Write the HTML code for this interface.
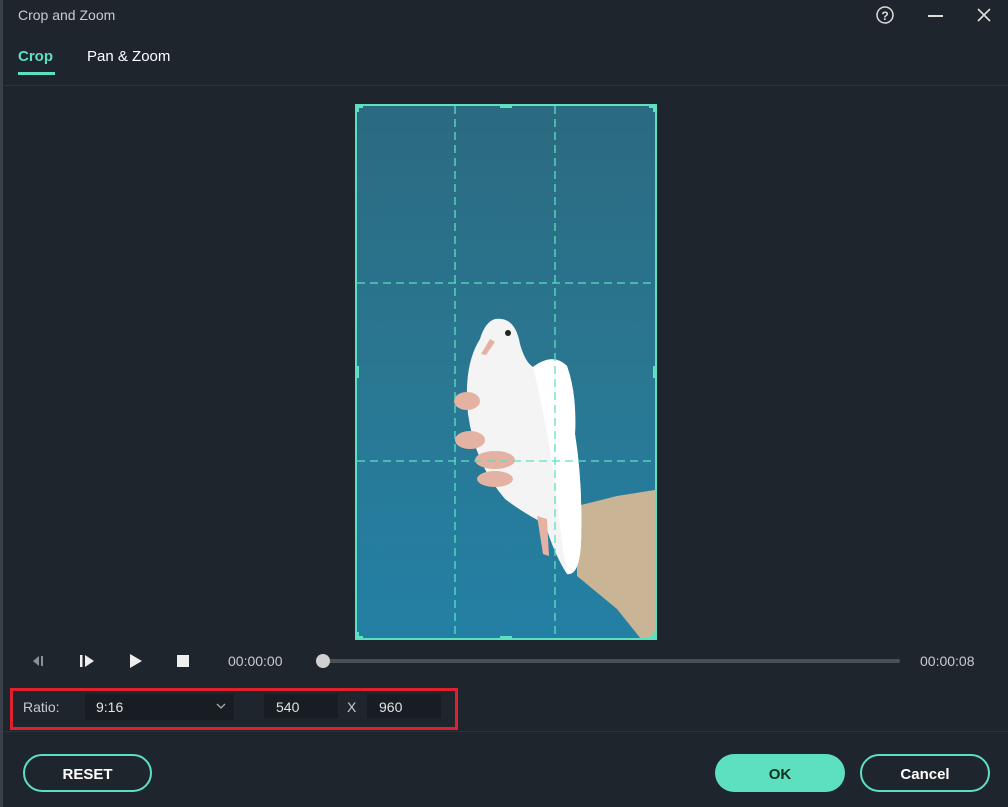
<!DOCTYPE html>
<html><head><style>
body{margin:0;width:1008px;height:807px;background:#1f252d;font-family:"Liberation Sans",sans-serif;position:relative;overflow:hidden;color:#e6e8ea}
.a{position:absolute}
.btn{position:absolute;height:38px;border-radius:20px;box-sizing:border-box;font-weight:bold;font-size:15px;display:flex;align-items:center;justify-content:center;padding-top:2px}
</style></head><body>
<div class="a" style="left:0;top:0;width:3px;height:807px;background:#3a4048"></div>
<div class="a" style="left:18px;top:7px;font-size:14px;color:#c8ccd0">Crop and Zoom</div>
<svg class="a" style="left:875px;top:5px" width="20" height="20"><circle cx="10" cy="10" r="8" fill="none" stroke="#ddd" stroke-width="1.5"/><text x="10" y="15" font-size="12" text-anchor="middle" fill="#ddd" font-family="Liberation Sans" font-weight="bold">?</text></svg>
<div class="a" style="left:928px;top:15px;width:15px;height:1.5px;background:#ddd"></div>
<svg class="a" style="left:976px;top:7px" width="16" height="16"><path d="M2 2L14 14M14 2L2 14" stroke="#ddd" stroke-width="1.6"/></svg>
<div class="a" style="left:18px;top:48px;font-size:15px;font-weight:bold;color:#5ce0c0">Crop</div>
<div class="a" style="left:18px;top:72px;width:37px;height:3px;background:#5ce0c0"></div>
<div class="a" style="left:87px;top:48px;font-size:15px;color:#fff">Pan &amp; Zoom</div>
<div class="a" style="left:3px;top:85px;width:1005px;height:1px;background:#2b323a"></div>
<svg class="a" style="left:355px;top:104px" width="302" height="536">
<defs><linearGradient id="g" x1="0" y1="0" x2="0" y2="1"><stop offset="0" stop-color="#2b6a80"/><stop offset="0.5" stop-color="#2a7792"/><stop offset="1" stop-color="#2380a4"/></linearGradient></defs>
<rect x="1" y="1" width="300" height="534" fill="url(#g)"/>
<path d="M222 402 L262 392 L300 386 L300 535 L286 535 L262 505 L222 472Z" fill="#c9b596"/>
<path d="M140 215 Q160 212 165 240 Q170 258 178 263 Q198 248 212 262 Q222 290 220 330 Q228 380 226 440 Q224 472 212 470 Q200 452 190 420 Q170 410 150 395 Q120 360 113 310 Q108 262 125 235 Q130 218 140 215Z" fill="#f4f4f4"/>
<path d="M178 263 Q198 248 212 262 Q222 290 220 330 Q228 380 226 440 Q224 472 212 470 Q205 430 200 380 Q192 320 178 263Z" fill="#ffffff"/>
<g fill="#e4b2a2">
<ellipse cx="112" cy="297" rx="13" ry="9"/>
<ellipse cx="115" cy="336" rx="15" ry="9"/>
<ellipse cx="140" cy="356" rx="20" ry="9"/>
<ellipse cx="140" cy="375" rx="18" ry="8"/>
<path d="M182 412 L188 450 L194 452 L192 415Z"/>
<path d="M135 235 L126 250 L131 251 L140 238Z"/>
</g>
<circle cx="153" cy="229" r="3" fill="#222"/>
<rect x="1" y="1" width="300" height="534" fill="none" stroke="#5ce0c0" stroke-width="2"/>
<g stroke="#5ce0c0" stroke-width="1.3" stroke-dasharray="8,5" fill="none">
<line x1="100" y1="2" x2="100" y2="534"/><line x1="200" y1="2" x2="200" y2="534"/>
<line x1="2" y1="179" x2="300" y2="179"/><line x1="2" y1="357" x2="300" y2="357"/></g>
<g fill="#5ce0c0"><rect x="0" y="0" width="8" height="4"/><rect x="0" y="0" width="4" height="8"/><rect x="294" y="0" width="8" height="4"/><rect x="298" y="0" width="4" height="8"/><rect x="0" y="532" width="8" height="4"/><rect x="0" y="528" width="4" height="8"/><rect x="294" y="532" width="8" height="4"/><rect x="298" y="528" width="4" height="8"/><rect x="145" y="0" width="12" height="4"/><rect x="145" y="532" width="12" height="4"/><rect x="0" y="262" width="4" height="12"/><rect x="298" y="262" width="4" height="12"/></g>
</svg>
<svg class="a" style="left:30px;top:653px" width="170" height="16">
<path d="M3 8L9 3V13Z" fill="#8a9098"/><rect x="11" y="3" width="2" height="10" fill="#8a9098"/>
<rect x="50" y="2" width="2.5" height="12" fill="#eee"/><path d="M55 2L64 8L55 14Z" fill="#eee"/>
<path d="M100 1L112 8L100 15Z" fill="#eee"/>
<rect x="147" y="2" width="12" height="12" fill="#eee"/></svg>
<div class="a" style="left:228px;top:653px;font-size:14px;color:#c8ccd0">00:00:00</div>
<div class="a" style="left:322px;top:659px;width:578px;height:4px;border-radius:2px;background:#4a5058"></div>
<div class="a" style="left:316px;top:654px;width:14px;height:14px;border-radius:50%;background:#d0d0d0"></div>
<div class="a" style="left:920px;top:653px;font-size:14px;color:#c8ccd0">00:00:08</div>
<div class="a" style="left:10px;top:688px;width:448px;height:42px;box-sizing:border-box;border:3px solid #e0202c"></div>
<div class="a" style="left:23px;top:699px;font-size:14px;color:#c8ccd0">Ratio:</div>
<div class="a" style="left:85px;top:694px;width:149px;height:26px;background:#181d23;border-radius:2px"></div>
<div class="a" style="left:96px;top:699px;font-size:14px;color:#e0e2e4">9:16</div>
<svg class="a" style="left:216px;top:702px" width="10" height="8"><path d="M1 2L5 6L9 2" stroke="#aaa" fill="none" stroke-width="1.3"/></svg>
<div class="a" style="left:264px;top:694px;width:74px;height:24px;background:#181d23"></div>
<div class="a" style="left:276px;top:699px;font-size:14px;color:#e0e2e4">540</div>
<div class="a" style="left:347px;top:699px;font-size:14px;color:#c8ccd0">X</div>
<div class="a" style="left:367px;top:694px;width:74px;height:24px;background:#181d23"></div>
<div class="a" style="left:379px;top:699px;font-size:14px;color:#e0e2e4">960</div>
<div class="a" style="left:3px;top:731px;width:1005px;height:1px;background:#2b323a"></div>
<div class="btn" style="left:23px;top:754px;width:129px;border:2px solid #5ce0c0;color:#fff">RESET</div>
<div class="btn" style="left:715px;top:754px;width:130px;background:#5ce0c0;color:#10301f">OK</div>
<div class="btn" style="left:860px;top:754px;width:130px;border:2px solid #5ce0c0;color:#fff">Cancel</div>
</body></html>
